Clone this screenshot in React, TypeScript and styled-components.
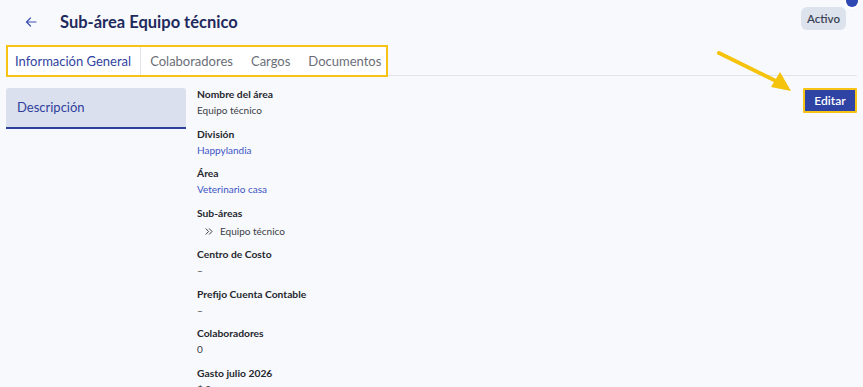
import styled, { createGlobalStyle } from 'styled-components';

const GlobalStyle = createGlobalStyle`
	html, body {
		margin: 0;
		padding: 0;
		background: #f8f9fc;
		font-family: Lato, 'Noto Sans', sans-serif;
	}
	* {
		box-sizing: border-box;
	}
`;

const TABS = ['Información General', 'Colaboradores', 'Cargos', 'Documentos'];

type Field = {
	label: string;
	value: string;
	link?: boolean;
	nested?: boolean;
};

const FIELDS: Field[] = [
	{ label: 'Nombre del área', value: 'Equipo técnico' },
	{ label: 'División', value: 'Happylandia', link: true },
	{ label: 'Área', value: 'Veterinario casa', link: true },
	{ label: 'Sub-áreas', value: 'Equipo técnico', nested: true },
	{ label: 'Centro de Costo', value: '–' },
	{ label: 'Prefijo Cuenta Contable', value: '–' },
	{ label: 'Colaboradores', value: '0' },
	{ label: 'Gasto julio 2026', value: '$ 0' },
];

const App = () => {
	return (
		<Page>
			<GlobalStyle />
			<Header>
				<TitleRow>
					<BackButton aria-label="Volver">
						<svg width="12" height="12" viewBox="0 0 12 12" fill="none">
							<path
								d="M11 6H1.5M5.5 2L1.5 6l4 4"
								stroke="#3d4fb0"
								strokeWidth="1.2"
								strokeLinecap="round"
								strokeLinejoin="round"
							/>
						</svg>
					</BackButton>
					<Title>Sub-área Equipo técnico</Title>
				</TitleRow>
				<Badge>Activo</Badge>
				<Dot />
			</Header>

			<TabsRow>
				<TabsBox>
					{TABS.map((tab, i) => (
						<Tab key={tab} $active={i === 0}>
							{tab}
						</Tab>
					))}
				</TabsBox>
				<TabsLine />
			</TabsRow>

			<Body>
				<Sidebar>
					<SideItem>Descripción</SideItem>
				</Sidebar>
				<Details>
					{FIELDS.map((field) => (
						<FieldBlock key={field.label}>
							<Label>{field.label}</Label>
							{field.nested ? (
								<NestedValue>
									<svg width="8" height="7" viewBox="0 0 8 7" fill="none">
										<path
											d="M1 0.8L3.6 3.5L1 6.2M4.4 0.8L7 3.5L4.4 6.2"
											stroke="#3a3d46"
											strokeWidth="1"
											strokeLinecap="round"
											strokeLinejoin="round"
										/>
									</svg>
									{field.value}
								</NestedValue>
							) : (
								<Value $link={field.link}>{field.value}</Value>
							)}
						</FieldBlock>
					))}
				</Details>
				<Actions>
					<Highlight>
						<EditButton>Editar</EditButton>
					</Highlight>
				</Actions>
			</Body>

			<Pointer width="90" height="50" viewBox="0 0 90 50">
				<line x1="5" y1="5" x2="64" y2="34" stroke="#f5c20c" strokeWidth="4" strokeLinecap="round" />
				<polygon points="77,43 57,39 66,24" fill="#f5c20c" />
			</Pointer>
		</Page>
	);
};

const Page = styled.main`
	position: relative;
	width: 863px;
	height: 387px;
	overflow: hidden;
	background: #f8f9fc;
`;

const Header = styled.header`
	position: relative;
	display: flex;
	align-items: flex-start;
	justify-content: space-between;
	padding: 7px 18px 0 22px;
	height: 45px;
`;

const TitleRow = styled.div`
	display: flex;
	align-items: center;
	gap: 21px;
	padding-top: 5px;
`;

const BackButton = styled.button`
	display: flex;
	align-items: center;
	justify-content: center;
	width: 16px;
	height: 16px;
	padding: 0;
	margin-left: 1px;
	border: 0;
	background: transparent;
	cursor: pointer;
`;

const Title = styled.h1`
	margin: 0;
	font-size: 16.5px;
	font-weight: 700;
	color: #1f2a5c;
`;

const Badge = styled.span`
	display: inline-flex;
	align-items: center;
	height: 23px;
	padding: 0 6px;
	margin-right: -1px;
	border-radius: 6px;
	background: #dce3ed;
	color: #3a4256;
	font-size: 11.5px;
	font-weight: 600;
`;

const Dot = styled.span`
	position: absolute;
	top: -5px;
	right: 5px;
	width: 12px;
	height: 12px;
	border-radius: 50%;
	background: #2f48b4;
	box-shadow: 0 0 0 2px #ffffff;
`;

const TabsRow = styled.div`
	display: flex;
	align-items: flex-end;
	padding-left: 6px;
	padding-right: 6px;
`;

const TabsBox = styled.nav`
	display: flex;
	height: 32px;
	background: #ffffff;
	border: 2px solid #f7c416;
`;

const Tab = styled.button<{ $active?: boolean }>`
	display: flex;
	align-items: center;
	padding: 0 9px 0 ${(p) => (p.$active ? '7px' : '9px')};
	border: 0;
	border-right: ${(p) => (p.$active ? '1px solid #e3e5ea' : '0')};
	background: transparent;
	font-family: inherit;
	font-size: 13px;
	color: ${(p) => (p.$active ? '#3143a0' : '#6b6e78')};
	cursor: pointer;

	&:last-child {
		padding-right: 5px;
	}
`;

const TabsLine = styled.div`
	flex: 1;
	height: 1px;
	margin-bottom: 1px;
	background: #e2e4ea;
`;

const Body = styled.section`
	display: flex;
	align-items: flex-start;
	padding: 11px 6px 0 6px;
`;

const Sidebar = styled.aside`
	width: 180px;
	flex-shrink: 0;
`;

const SideItem = styled.div`
	display: flex;
	align-items: center;
	height: 41px;
	padding-left: 11px;
	padding-bottom: 2px;
	border-radius: 3px 3px 0 0;
	background: #dbe0ef;
	border-bottom: 2px solid #2f3f9c;
	color: #2f3f9c;
	font-size: 13px;
`;

const Details = styled.div`
	display: flex;
	flex-direction: column;
	gap: 10.5px;
	flex: 1;
	padding-left: 11px;
`;

const FieldBlock = styled.div`
	display: flex;
	flex-direction: column;
	gap: 3px;
`;

const Label = styled.span`
	font-size: 10.3px;
	font-weight: 700;
	color: #25272e;
	line-height: 13px;
`;

const Value = styled.span<{ $link?: boolean }>`
	font-size: 10px;
	line-height: 13px;
	color: ${(p) => (p.$link ? '#3b55c4' : '#3a3d46')};
`;

const NestedValue = styled.span`
	display: flex;
	align-items: center;
	gap: 7px;
	padding-left: 8px;
	padding-top: 2px;
	font-size: 10px;
	line-height: 13px;
	color: #3a3d46;
`;

const Actions = styled.div`
	padding-top: 0;
`;

const Highlight = styled.div`
	padding: 2px;
	background: #f7c416;
	border-radius: 1px;
`;

const EditButton = styled.button`
	display: flex;
	align-items: center;
	justify-content: center;
	width: 50px;
	height: 21px;
	border: 0;
	background: #2e43a4;
	color: #ffffff;
	font-family: inherit;
	font-size: 12px;
	font-weight: 600;
	cursor: pointer;
`;

const Pointer = styled.svg`
	position: absolute;
	top: 48px;
	left: 714px;
	pointer-events: none;
`;

export default App;
